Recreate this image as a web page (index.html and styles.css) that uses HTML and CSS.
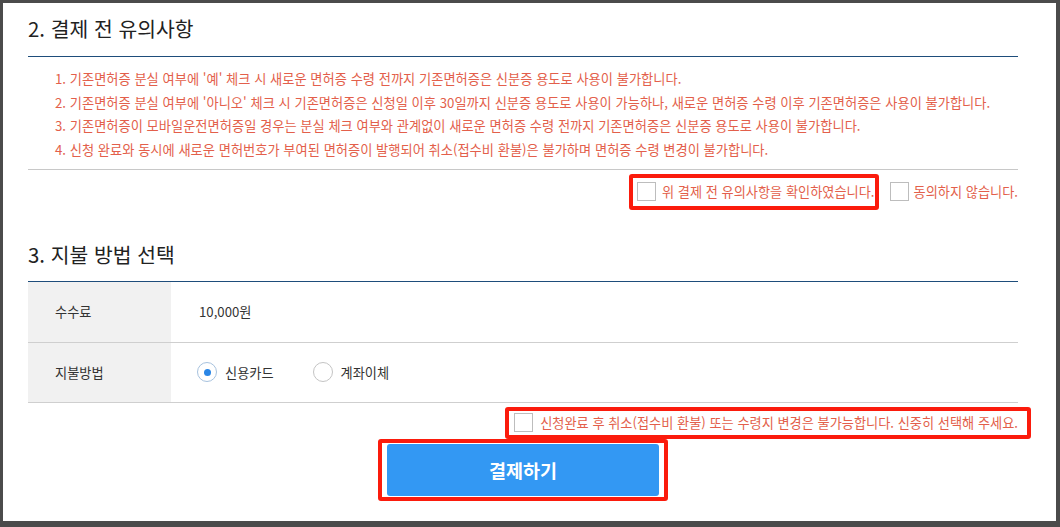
FILE: index.html
```html
<!DOCTYPE html>
<html lang="ko">
<head>
<meta charset="utf-8">
<title>결제</title>
<link rel="stylesheet" href="styles.css">
</head>
<body>
<div class="frame">
  <div class="content">
    <h2 class="sec-title">2. 결제 전 유의사항</h2>
    <ol class="notice">
      <li>1. 기존면허증 분실 여부에 '예' 체크 시 새로운 면허증 수령 전까지 기존면허증은 신분증 용도로 사용이 불가합니다.</li>
      <li>2. 기존면허증 분실 여부에 '아니오' 체크 시 기존면허증은 신청일 이후 30일까지 신분증 용도로 사용이 가능하나, 새로운 면허증 수령 이후 기존면허증은 사용이 불가합니다.</li>
      <li>3. 기존면허증이 모바일운전면허증일 경우는 분실 체크 여부와 관계없이 새로운 면허증 수령 전까지 기존면허증은 신분증 용도로 사용이 불가합니다.</li>
      <li>4. 신청 완료와 동시에 새로운 면허번호가 부여된 면허증이 발행되어 취소(접수비 환불)은 불가하며 면허증 수령 변경이 불가합니다.</li>
    </ol>
    <div class="agree-row">
      <label class="check hl hl-agree"><span class="box"></span><span class="check-text">위 결제 전 유의사항을 확인하였습니다.</span></label>
      <label class="check"><span class="box"></span><span class="check-text">동의하지 않습니다.</span></label>
    </div>

    <h2 class="sec-title sec3">3. 지불 방법 선택</h2>
    <div class="pay-table">
      <div class="pay-row">
        <div class="pay-label">수수료</div>
        <div class="pay-value">10,000원</div>
      </div>
      <div class="pay-row">
        <div class="pay-label">지불방법</div>
        <div class="pay-value">
          <label class="radio"><span class="ring checked"></span>신용카드</label>
          <label class="radio"><span class="ring"></span>계좌이체</label>
        </div>
      </div>
    </div>
    <div class="confirm-row">
      <label class="check hl hl-confirm"><span class="box"></span><span class="check-text">신청완료 후 취소(접수비 환불) 또는 수령지 변경은 불가능합니다. 신중히 선택해 주세요.</span></label>
    </div>
    <div class="btn-row">
      <div class="hl hl-btn"><button class="pay-btn" type="button">결제하기</button></div>
    </div>
  </div>
</div>
</body>
</html>
```

FILE: styles.css
```css
html, body {
  margin: 0;
  padding: 0;
  height: 527px;
  overflow: hidden;
  background: #4b4b4b;
}
body {
  font-family: "Noto Sans CJK KR", "Noto Sans", sans-serif;
  color: #333;
}
.frame {
  margin: 3px 4px 0 3px;
  height: 518px;
  background: #fff;
  overflow: hidden;
}
.content {
  padding: 0 38px 0 25px;
}
.sec-title {
  margin: 0;
  padding: 10px 0 13px;
  font-size: 20.4px;
  line-height: 30px;
  font-weight: 400;
  color: #222;
  border-bottom: 1px solid #1e4d7b;
}
.sec3 {
  margin-top: 19px;
  padding-bottom: 12px;
}
.notice {
  list-style: none;
  margin: 0;
  padding: 10px 0 7px 27px;
  border-bottom: 1px solid #c8c8c8;
}
.notice li {
  font-size: 13.25px;
  line-height: 23.7px;
  color: #e35f4b;
  white-space: nowrap;
}
.agree-row {
  display: flex;
  justify-content: flex-end;
  align-items: center;
  gap: 11px;
  margin-top: 4px;
}
.check {
  display: inline-flex;
  align-items: center;
  gap: 5px;
  font-size: 13.2px;
  line-height: 20px;
  color: #e35f4b;
  white-space: nowrap;
}
.box {
  width: 19px;
  height: 19px;
  border: 1px solid #bdbdbd;
  background: #fff;
  box-sizing: border-box;
  flex: none;
}
.hl {
  border: 4px solid #fb1b0c;
  border-radius: 3px;
}
.hl-agree {
  height: 28px;
  padding: 0 0 0 4px;
  gap: 6px;
}
.pay-row {
  display: flex;
  height: 60px;
  border-bottom: 1px solid #cfcfcf;
  font-size: 13.2px;
}
.pay-row + .pay-row {
  height: 59px;
}
.pay-label {
  width: 143px;
  flex: none;
  background: #f1f1f1;
  padding-left: 27px;
  box-sizing: border-box;
  display: flex;
  align-items: center;
  color: #333;
}
.pay-value {
  padding-left: 28px;
  display: flex;
  align-items: center;
  color: #333;
}
.radio {
  display: inline-flex;
  align-items: center;
  gap: 8px;
  margin-left: -2px;
  margin-right: 41px;
}
.ring {
  width: 20px;
  height: 20px;
  border-radius: 50%;
  border: 1px solid #c4c4c4;
  box-sizing: border-box;
  display: inline-flex;
  align-items: center;
  justify-content: center;
  background: #fff;
}
.ring.checked {
  border-color: #a7c2de;
}
.ring.checked::after {
  content: "";
  width: 7px;
  height: 7px;
  border-radius: 50%;
  background: #2a86e6;
}
.confirm-row {
  display: flex;
  justify-content: flex-end;
  margin-top: 4px;
  margin-right: -13px;
}
.hl-confirm {
  height: 24px;
  padding: 0 9px 0 5px;
  gap: 7px;
}
.btn-row {
  display: flex;
  justify-content: center;
}
.hl-btn {
  padding: 1px 5px;
}
.pay-btn {
  display: block;
  width: 272px;
  height: 52px;
  border: none;
  border-radius: 3px;
  background: #3398f3;
  color: #fff;
  font-family: "Noto Sans CJK KR", "Noto Sans", sans-serif;
  font-size: 18.5px;
  font-weight: 700;
  cursor: pointer;
}
```
